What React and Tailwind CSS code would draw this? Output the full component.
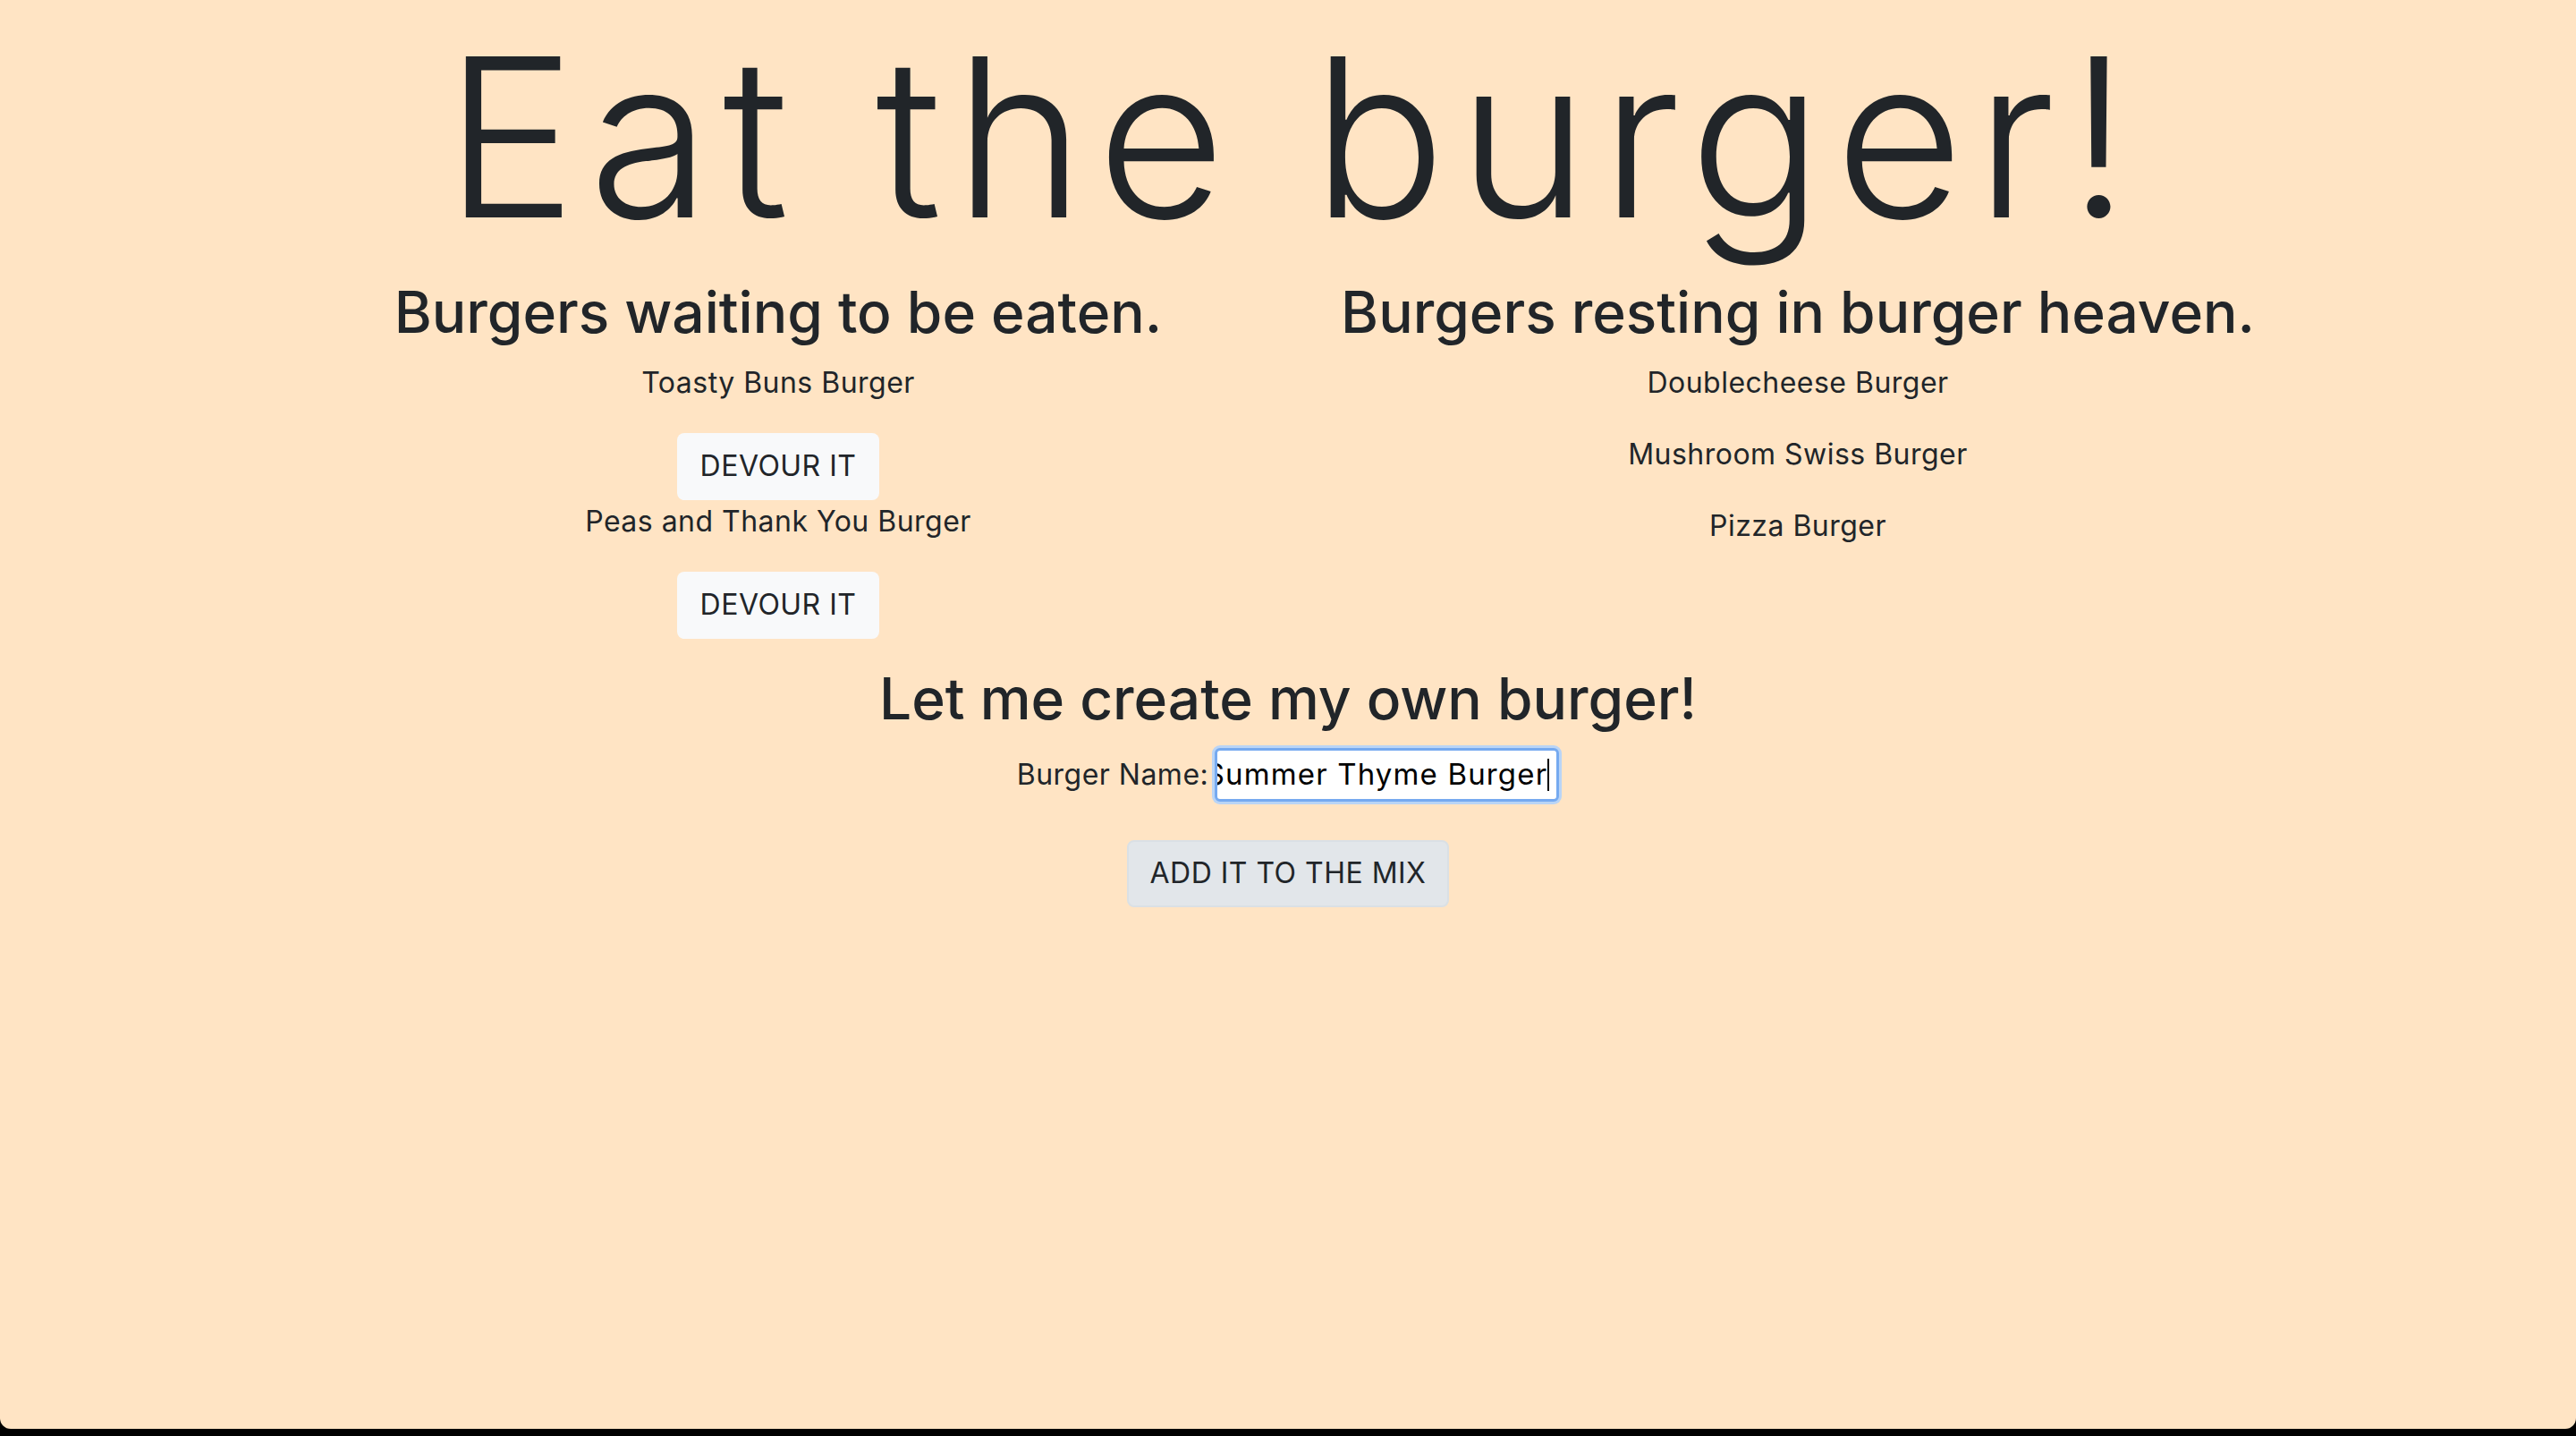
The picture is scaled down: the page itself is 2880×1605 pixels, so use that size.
import React from 'react';

const waiting = ['Toasty Buns Burger', 'Peas and Thank You Burger'];
const devoured = ['Doublecheese Burger', 'Mushroom Swiss Burger', 'Pizza Burger'];

export default function App() {
  return (
    <div className="h-[1605px] bg-black">
      <div className="h-[1597px] overflow-hidden rounded-b-[12px] bg-[#ffe4c4] text-[#212529] font-['Inter','Noto_Sans',sans-serif] tracking-[0.03em]">
        {/* Title */}
        <h1 className="pl-[12px] text-center text-[248px] leading-[307px] font-light tracking-[0.055em]">Eat the burger!</h1>

        {/* Two lists */}
        <div className="mx-auto mt-[4px] grid w-[2280px] grid-cols-2">
          <div className="flex flex-col items-center">
            <h2 className="mb-[16px] text-[64px] leading-[1.2] font-medium tracking-normal">Burgers waiting to be eaten.</h2>
            {waiting.map((name) => (
              <div key={name} className="flex flex-col items-center">
                <p className="mb-[32px] text-[32px] leading-[48px]">{name}</p>
                <button className="h-[75px] rounded-[8px] bg-[#f8f9fa] px-[26px] text-[32px] text-[#212529]">
                  DEVOUR IT
                </button>
              </div>
            ))}
          </div>
          <div className="flex flex-col items-center">
            <h2 className="mb-[16px] text-[64px] leading-[1.2] font-medium tracking-normal">Burgers resting in burger heaven.</h2>
            {devoured.map((name) => (
              <p key={name} className="mb-[32px] text-[32px] leading-[48px]">{name}</p>
            ))}
          </div>
        </div>

        {/* Create form */}
        <div className="mt-[29px] flex flex-col items-center">
          <h2 className="mb-[16px] text-[64px] leading-[1.2] font-medium tracking-normal">Let me create my own burger!</h2>
          <div className="flex items-center gap-[7px]">
            <span className="text-[32px] leading-[48px]">Burger Name:</span>
            <div className="flex h-[60px] w-[385px] items-center justify-end overflow-hidden rounded-[6px] border-[3px] border-[#76aaf0] bg-white pr-[8px] shadow-[0_0_0_3px_#b9d4f6]">
              <span className="whitespace-nowrap text-[33px] leading-none tracking-[0.035em] text-black">Summer Thyme Burger</span>
              <span className="h-[36px] w-[2px] shrink-0 bg-black" />
            </div>
          </div>
          <button className="mt-[43px] h-[75px] rounded-[8px] border-[2px] border-[#dae0e5] bg-[#e2e6ea] px-[24px] text-[32px] text-[#212529]">
            ADD IT TO THE MIX
          </button>
        </div>
      </div>
    </div>
  );
}
